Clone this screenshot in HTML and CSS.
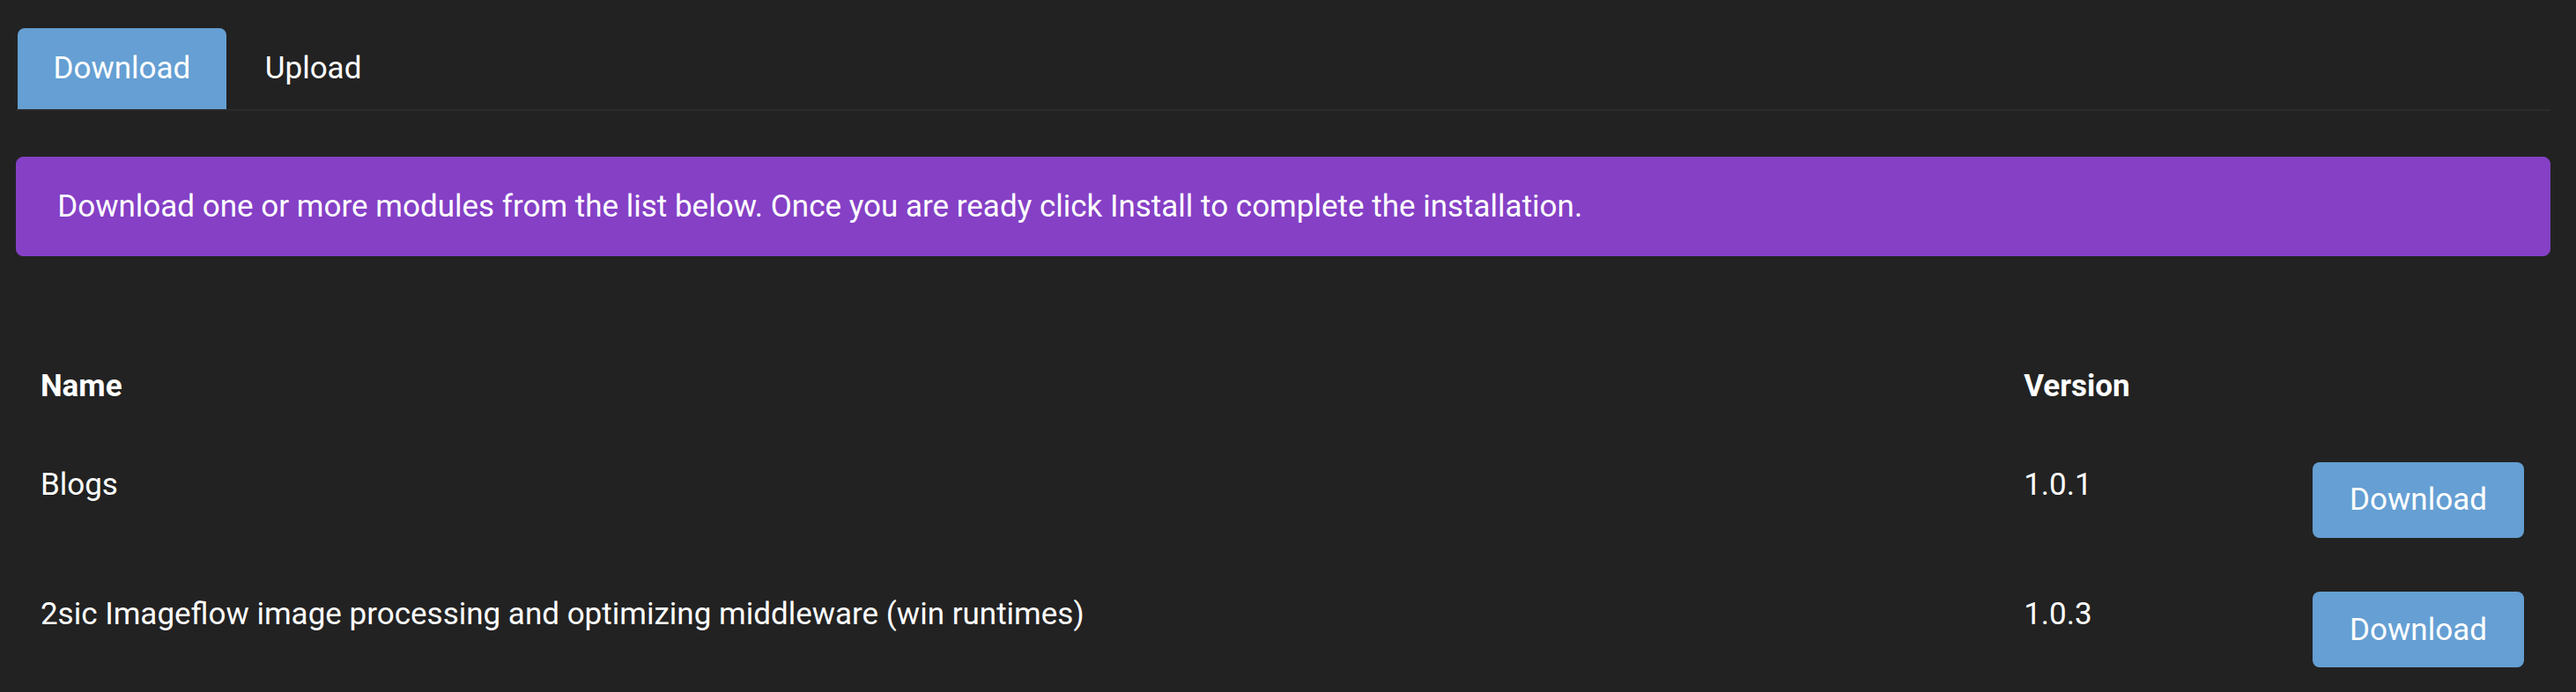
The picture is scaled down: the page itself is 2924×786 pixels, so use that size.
FILE: index.html
```html
<!DOCTYPE html>
<html lang="en">
<head>
<meta charset="utf-8">
<title>Install Modules</title>
<link rel="stylesheet" href="styles.css">
</head>
<body>
<div class="page">
  <ul class="tabs">
    <li class="tab tab-active">Download</li>
    <li class="tab tab-plain">Upload</li>
  </ul>
  <div class="alert">Download one or more modules from the list below. Once you are ready click Install to complete the installation.</div>
  <table class="modules">
    <colgroup>
      <col class="col-name">
      <col class="col-version">
      <col class="col-action">
    </colgroup>
    <thead>
      <tr><th>Name</th><th>Version</th><th></th></tr>
    </thead>
    <tbody>
      <tr>
        <td>Blogs</td>
        <td>1.0.1</td>
        <td class="action"><button class="btn" type="button">Download</button></td>
      </tr>
      <tr>
        <td>2sic Imageflow image processing and optimizing middleware (win runtimes)</td>
        <td>1.0.3</td>
        <td class="action"><button class="btn" type="button">Download</button></td>
      </tr>
    </tbody>
  </table>
</div>
</body>
</html>
```

FILE: styles.css
```css
html, body {
  margin: 0;
  padding: 0;
  background: #222222;
}
body {
  font-family: Roboto, "Liberation Sans", sans-serif;
  font-size: 35px;
  line-height: 55.2px;
  color: #ffffff;
}
.page {
  margin: 0 29px 0 18.3px;
  padding-top: 32px;
}
.tabs {
  list-style: none;
  margin: 0;
  padding: 0 0 0 1.7px;
  display: flex;
  border-bottom: 2px solid #2b2b2b;
}
.tab {
  padding: 18.4px 40.5px;
  color: #ffffff;
  border-radius: 8px 8px 0 0;
}
.tab-active {
  background: #659fd3;
}
.tab-plain {
  padding-left: 44px;
}
.alert {
  margin-top: 52.3px;
  padding: 27.6px 46px;
  background: #8540c6;
  border: 1px solid #8540c6;
  border-radius: 8px;
  color: #ffffff;
}
.modules {
  width: 100%;
  margin-top: 92.5px;
  border-collapse: collapse;
  table-layout: fixed;
}
.col-version {
  width: 327.4px;
}
.col-action {
  width: 298px;
}
.modules th {
  text-align: left;
  font-weight: 700;
  padding: 27.6px;
  vertical-align: top;
}
.modules td {
  padding: 29.5px 27.6px 0;
  vertical-align: top;
}
.modules td.action {
  padding: 31.4px 27.6px 29.6px;
}
.btn {
  display: inline-block;
  font-family: inherit;
  font-size: 35px;
  line-height: 55.2px;
  color: #ffffff;
  background: #659fd3;
  border: 0;
  border-radius: 8px;
  padding: 15.5px 42.5px;
  margin: 0;
  cursor: pointer;
}
```
